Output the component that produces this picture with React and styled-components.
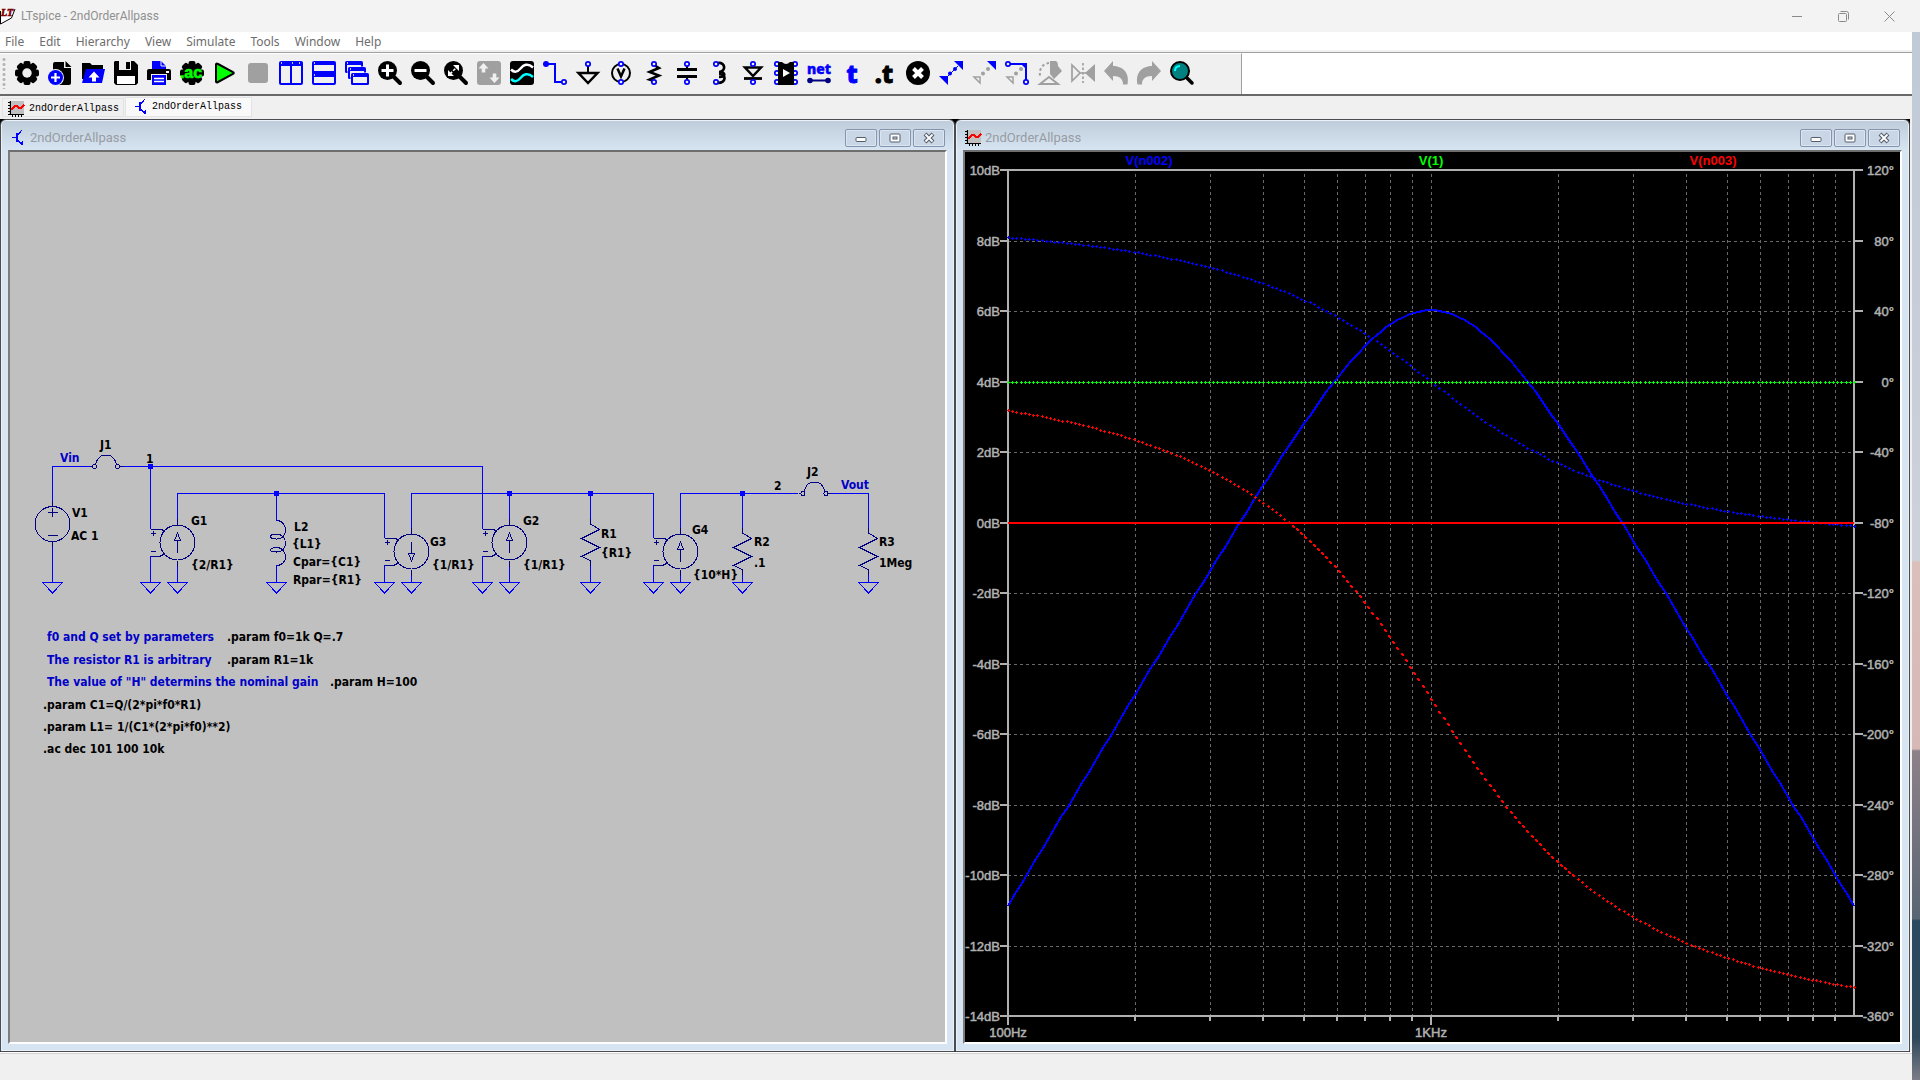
import React, { useState } from 'react';
import styled, { createGlobalStyle, css } from 'styled-components';

const GlobalStyle = createGlobalStyle`
  * { box-sizing:border-box; }
  html, body, #root { height:100%; margin:0; }
  body { overflow:hidden; font-family:"Noto Sans", sans-serif; font-size:12px; background:#f0f0f0; }
  button { font:inherit; color:inherit; border:none; background:none; padding:0; margin:0; }
  svg { display:block; overflow:visible; }
`;

const Screen = styled.div`height:100%; display:flex; flex-direction:column;`;

const TitleBar = styled.header`
  flex:none; height:32px; display:flex; align-items:center; background:#f3f3f3; color:#909090;
`;
const AppName = styled.h1`flex:1; margin:0 0 0 5px; font:400 12px Roboto, "Noto Sans", sans-serif;`;
const Caption = styled.div`display:flex; padding-right:8px;`;
const CaptionButton = styled.button`
  width:46px; height:32px; display:flex; align-items:center; justify-content:center;
  &:hover { background:#e5e5e5; }
`;

const Desktop = styled.div`flex:1; min-height:0; display:flex;`;
const Main = styled.div`flex:1; min-width:0; display:flex; flex-direction:column; background:#f0f0f0;`;
const Wallpaper = styled.div`
  flex:none; width:8px;
  background:linear-gradient(#c0cad7, #cdd1da 50.4%, #dabfba 50.6%, #d6b8b7 68.4%, #8d8189 68.6%, #596573 84.6%,
    #2a4a60 84.8%, #2f485b 96%, #7b7d87);
`;

const MenuBar = styled.nav`
  flex:none; height:20px; padding:1px 5px 0; display:flex; align-items:center; gap:15px;
  background:#fff; border-bottom:2px solid #f0f0f0; color:#6d6d6d;
`;
const MenuItem = styled.button`line-height:17px; &:hover { color:#000; }`;

const ToolRow = styled.div`
  flex:none; display:flex; background:#fff; height:44px;
  border-top:1px solid #a0a0a0; border-bottom:2px solid #696969;
`;
const ToolBar = styled.div`
  display:flex; align-items:center; width:1242px; padding-bottom:2px; background:#f0f0f0;
  border-top:1px solid #fff; border-right:1px solid #a0a0a0;
`;
const Grip = styled.div`
  width:4px; height:32px; margin:0 4px 0 2px;
  background:radial-gradient(circle, #b4b4b4 1px, transparent 2px) 0 0 / 4px 5px;
`;
const ToolButton = styled.button`
  width:33px; height:33px; display:flex; align-items:center; justify-content:center;
  &:hover:enabled { background:#dcebf8; }
`;

const TabRow = styled.div`flex:none; height:23px; padding:1px 2px 2px; display:flex; align-items:flex-end; gap:1px;`;
const Tab = styled.button`
  display:flex; align-items:center; gap:5px; padding:2px 4px 0 5px; height:19px;
  font:10px "Liberation Mono", monospace; color:#000; border:1px solid #e3e3e3;
  ${({ $active }) => $active && css`height:20px; width:127px; padding:0 6px 1px 7px; gap:3px; background:#f9f9f9;`}
`;

const Mdi = styled.main`flex:1; min-height:0; margin-right:2px; display:flex; background:#000;`;
const Child = styled.section`
  flex:1; min-width:0; display:flex; flex-direction:column; padding:0 7px 7px;
  border:1px solid #4b4b50; border-radius:6px 6px 0 0;
  background:linear-gradient(#becbd9, #d7e4f2 30px);
  box-shadow:inset 0 0 0 1px #e9f1f9;
`;
const ChildTitle = styled.div`
  flex:none; height:30px; display:flex; align-items:center; gap:2px; padding-left:2px; color:#979ca3;
  h2 { flex:1; margin:0; padding:5px 0 0 2px; font:400 13px/20px Roboto, "Noto Sans", sans-serif; }
  > svg { margin-top:5px; }
`;
const ChildButtons = styled.div`display:flex; gap:2px; padding:6px 2px 0 0;`;
const ChildButton = styled.button`
  width:32px; height:18px; display:flex; align-items:center; justify-content:center;
  border:1px solid #8593ad; border-radius:2px; background:#c9d6e5; box-shadow:inset 0 0 0 1px #dbe6f2;
  &:hover { background:#e1ecf8; }
`;
const Client = styled.div`
  flex:1; min-height:0; background:${({ $bg }) => $bg};
  border:2px solid; border-color:#6e6e6e #fff #fff #7c7c7c;
  svg { width:100%; height:100%; }
`;
const StatusBar = styled.footer`flex:none; height:28px; border-top:1px solid #fff; box-shadow:inset 0 1px #d4d4d4;`;

const Glyph = ({ size = 24, children }) => (
  <svg width={size} height={size} viewBox={`0 0 ${size} ${size}`} fill="none" aria-hidden="true">{children}</svg>
);

const B = '#0000ff';
const G = '#a0a0a0';

const gear = (
  <>
    <circle cx="12" cy="12" r="9.5" fill="#000" />
    {[0, 45, 90, 135].map(a => (
      <rect key={a} x="8.5" y="0" width="7" height="24" rx="2" fill="#000" transform={`rotate(${a} 12 12)`} />
    ))}
  </>
);

const lens = (
  <>
    <circle cx="9.5" cy="9.5" r="9.5" fill="#000" />
    <path d="M15 15l7 7" stroke="#000" strokeWidth="4" strokeLinecap="round" />
  </>
);

const pin = (cx, cy, key) => <circle key={key} cx={cx} cy={cy} r="2.2" fill="#f0f0f0" stroke={B} strokeWidth="1.7" />;
const pins = <>{pin(12, 3)}{pin(12, 21)}</>;

const tools = [
  ['Settings', <>{gear}<circle cx="12" cy="12" r="4.7" fill="#f0f0f0" /></>],
  ['New Schematic', <>
    <path d="M5 3a2 2 0 0 1 2-2h9v6h7v15a2 2 0 0 1-2 2H5z" fill="#000" /><path d="M17.500 0l6 6h-6z" fill="#000" />
    <circle cx="7.500" cy="16.500" r="8.500" fill="#f0f0f0" /><circle cx="7.500" cy="16.500" r="7.500" fill={B} />
    <path d="M7.500 12v9M3 16.500h9" stroke="#fff" strokeWidth="2.200" />
  </>],
  ['Open', <>
    <path d="M1 2h8l2 2h11v4H6l-3 10H1z" fill="#000" /><path d="M5 8h19l-3 14H1z" fill={B} />
    <path d="M13 10.500l-5.500 6h3.500v4h4v-4h3.500z" fill="#fff" />
  </>],
  ['Save', <>
    <path d="M1 0h19l4 4v18l-2 2H2l-2-2V1z" fill="#000" /><path d="M5 0h12v9H5z" fill="#f0f0f0" />
    <path d="M12 1h4v7h-4z" fill="#000" /><path d="M3 15h18v8H3z" fill="#fff" />
  </>],
  ['Print', <>
    <path d="M5 0h9l5 5v3H5z" fill={B} /><path d="M14 0v5h5" stroke="#f0f0f0" />
    <path d="M0 10q0-2 2-2h20q2 0 2 2v9H0z" fill="#000" /><path d="M19 10h3v2h-3z" fill="#fff" />
    <path d="M4 13h16v11H4z" fill="#f0f0f0" /><path d="M5 14h14v10H5z" fill={B} />
    <path d="M7 17.500h10M7 20.500h10" stroke="#fff" strokeWidth="1.500" />
  </>],
  ['AC Analysis', <>
    {gear}<text x="11" y="17" textAnchor="middle" fontFamily="Liberation Sans" fontWeight="700" fontSize="16" fill="#0f0" stroke="#0f0" strokeWidth=".6">.ac</text>
  </>],
  ['Run', <path d="M3 3.500v17q0 1.500 2 .500l15-8q1.500-1 0-2L5 3q-2-1-2 .500z" fill="#0f0" stroke="#000" strokeWidth="2" />],
  ['Stop', <rect x="2" y="2" width="20" height="20" rx="3" fill={G} />, true],
  ['Tile Vertically', <>
    <rect x="0" y="0" width="24" height="24" rx="2" fill={B} /><path d="M2 5h9v17H2zM13 5h9v17h-9z" fill="#f0f0f0" />
    <path d="M2 2h1M13 2h1M20 2h1" stroke="#fff" strokeWidth="1.500" />
  </>],
  ['Tile Horizontally', <>
    <rect x="0" y="0" width="24" height="24" rx="2" fill={B} /><path d="M2 4h20v6H2zM2 16h20v6H2z" fill="#f0f0f0" />
    <path d="M2 2h1M2 14h1" stroke="#fff" strokeWidth="1.500" />
  </>],
  ['Cascade', <>
    {[[0, 0], [3, 6], [6, 12]].map(([x, y]) => (
      <g key={x} transform={`translate(${x} ${y})`}>
        <rect x="-.5" y="-.5" width="19" height="13" rx="2" fill="#f0f0f0" />
        <rect width="18" height="12" rx="1.500" fill={B} /><path d="M2 4h14v6H2z" fill="#f0f0f0" /><path d="M2 2h1" stroke="#fff" strokeWidth="1.500" />
      </g>
    ))}
  </>],
  ['Zoom In', <>{lens}<path d="M9.500 3.500v12M3.500 9.500h12" stroke="#fff" strokeWidth="3" /></>],
  ['Zoom Out', <>{lens}<path d="M3.500 9.500h12" stroke="#fff" strokeWidth="3" /></>],
  ['Zoom to Fit', <>{lens}<path d="M9 4h6v6zM4 9v6h6z" fill="#fff" /><path d="M6 13l7-7" stroke="#fff" strokeWidth="1.500" strokeDasharray="3 1.500" /></>],
  ['Autorange', <>
    <rect width="24" height="24" rx="3" fill={G} />
    <path d="M6.500 2l-5 5.500h3.200v4h3.600v-4h3.200zM17.500 22l-5-5.500h3.200v-4h3.600v4h3.200z" fill="#f0f0f0" />
  </>, true],
  ['Waveforms', <>
    <rect width="24" height="24" rx="3" fill="#000" />
    <path d="M1 8.500c3.500 3.500 6.500 2.500 9.500-1s7-6 12.500-1" stroke="#fff" strokeWidth="2.500" />
    <path d="M1 18c3.500 3.500 6.500 2.500 9.500-1s7-6 12.500-1" stroke="#0ff" strokeWidth="2.500" />
  </>],
  ['Wire', <><path d="M3 3h9v18h9" stroke={B} strokeWidth="2" /><circle cx="3" cy="3" r="3" fill={B} />{pin(21, 21)}</>],
  ['Ground', <><path d="M12 4v8" stroke="#000" strokeWidth="2" /><path d="M2.500 12h19L12 22z" stroke="#000" strokeWidth="2.500" />{pin(12, 3)}</>],
  ['Voltage Source', <><circle cx="12" cy="12" r="9" stroke="#000" strokeWidth="2" /><path d="M8.500 7.500L12 15.500l3.500-8" stroke="#000" strokeWidth="2.500" />{pins}</>],
  ['Resistor', <><path d="M12 4l5 3-9.500 4 9.500 3.500-9.500 4L12 20" stroke="#000" strokeWidth="2.500" />{pins}</>],
  ['Capacitor', <><path d="M12 4v5M12 15v6" stroke="#000" strokeWidth="2" /><path d="M2 8.500h20M2 15.500h20" stroke="#000" strokeWidth="3" />{pins}</>],
  ['Inductor', <><path d="M10 2c8-1 8 9 1 9C18 11 18 16 11 16" stroke="#000" strokeWidth="2.700" /><path d="M11 13c8 0 7 9-1 9" stroke="#000" strokeWidth="2.700" />{pin(8, 3)}{pin(8, 21)}</>],
  ['Diode', <><path d="M4 6.500h16L12 15z" stroke="#000" strokeWidth="2.500" /><path d="M3 17.500h18" stroke="#000" strokeWidth="2.800" />{pins}</>],
  ['Component', <>
    {[3, 12, 21].map(y => <g key={y}>{pin(3, y)}{pin(21, y)}</g>)}
    <path d="M4 1h4q4 4 8 0h4v23H4z" fill="#000" /><path d="M9 8l7 4-7 4z" fill="#fff" />
  </>],
  ['Label Net', <>
    <text x="12" y="13" textAnchor="middle" fontFamily="Noto Sans" fontWeight="800" fontSize="14" fill={B} stroke={B} strokeWidth=".5">net</text>
    <path d="M3 19.500h18" stroke="#000080" strokeWidth="2" /><circle cx="3" cy="19.500" r="2.800" fill="#000080" /><circle cx="21" cy="19.500" r="2.800" fill="#000080" />
  </>],
  ['Text', <text x="12" y="22" textAnchor="middle" fontFamily="Noto Sans" fontWeight="800" fontSize="25" fill={B} stroke={B}>t</text>],
  ['SPICE Directive', <text x="11" y="22" textAnchor="middle" fontFamily="Noto Sans" fontWeight="800" fontSize="25" fill="#000" stroke="#000">.t</text>],
  ['Delete', <><circle cx="12" cy="12" r="12" fill="#000" /><path d="M7.500 7.500l9 9M16.500 7.500l-9 9" stroke="#fff" strokeWidth="4" /></>],
  ['Duplicate', <>
    <path d="M15 0h9v9zM0 15h9v9z" fill={B} /><path d="M5 19L19 5" stroke={B} strokeWidth="1" />
    <circle cx="11" cy="12.500" r="2" fill={B} /><circle cx="16" cy="8" r="2" fill={B} />
  </>],
  ['Move', <><path d="M15 0h9v9z" fill={B} /><path d="M2 16h6v6z" stroke={G} strokeWidth="1.500" /><circle cx="11" cy="12.500" r="2" fill={G} /><circle cx="16" cy="8" r="2" fill={G} /></>],
  ['Drag', <>
    <path d="M2 16h6v6z" stroke={G} strokeWidth="1.500" /><circle cx="11" cy="12.500" r="2" fill={G} /><circle cx="16" cy="8" r="2" fill={G} />
    <path d="M4 3h17v16" stroke={B} strokeWidth="2" /><path d="M15 2h7v7z" fill={B} />{pin(3, 3)}{pin(21, 21)}
  </>],
  ['Rotate', <>
    <path d="M11 2C5 3 1 7 2 15" stroke={G} strokeWidth="2" strokeDasharray="2.500 2.500" />
    <path d="M12 0h6q2 1 2 5l4 5-8 8-4-5z" fill={G} /><path d="M2 23l9-7 9 7z" fill="#f0f0f0" stroke={G} strokeWidth="2" />
  </>, true],
  ['Mirror', <><path d="M1 4v16l8-8zM9 12h6" stroke={G} strokeWidth="1.700" /><path d="M24 3v18l-10-9z" fill={G} /><path d="M12 2v20" stroke={G} strokeWidth="1.700" strokeDasharray="2.500 2" /></>, true],
  ['Undo', <path d="M9 0v5c9 0 17 6 14.500 18.500H19C19 18 16 15 9 15v5L0 10z" fill={G} />, true],
  ['Redo', <path d="M15 0v5C6 5-2 11 .5 23.500H5C5 18 8 15 15 15v5l9-10z" fill={G} />, true],
  ['Find', <>
    <path d="M16 16l6 6" stroke="#000" strokeWidth="3.500" strokeLinecap="round" /><circle cx="10" cy="10" r="9" fill="#008080" stroke="#000" strokeWidth="2" />
    <path d="M5 10q0-5 5-5" stroke="#0ff" strokeWidth="2" />
  </>],
];

const PlotIcon = () => (
  <svg width="16" height="16" viewBox="0 0 16 16" shapeRendering="crispEdges" aria-hidden="true">
    <rect x="1" width="15" height="14" fill="#c0c0c0" />
    <path d="M2 0h1v13h13v1H2zM0 1h2v1H0zM0 4h2v1H0zM0 7h2v1H0zM0 10h2v1H0zM0 13h2v1H0zM4 14h1v2H4zM7 14h1v2H7zM10 14h1v2h-1zM13 14h1v2h-1z" fill="#000" />
    <path d="M3 9l4-4h2l2 2h2l3-3" stroke="#f00" strokeWidth="1.500" fill="none" />
  </svg>
);
const SchematicIcon = () => (
  <svg width="16" height="16" viewBox="0 0 16 16" fill="none" stroke={B} shapeRendering="crispEdges" aria-hidden="true">
    <path d="M2 7.500h5" /><path d="M6.500 3v9" strokeWidth="2" /><path d="M7 6l5-6M7 9l5 6" />
    <path d="M9 14l4 1v-4z" fill={B} stroke="none" />
  </svg>
);
const Logo = () => (
  <svg width="16" height="18" viewBox="0 0 16 18" fill="none" aria-hidden="true">
    <path d="M0 2.500h15L11 13 0 16.500z" fill="#fff" /><path d="M.5 4v13l11-6L15 2" stroke="#000" />
    <text x="1" y="9" fontFamily="Liberation Serif" fontStyle="italic" fontWeight="700" fontSize="10" fill="#800000" stroke="#800000" strokeWidth=".7">LT</text>
  </svg>
);

// ---- schematic ----
const NAVY = '#000080';
const SchematicText = styled.text`
  font:700 12px "DejaVu Sans Condensed", "DejaVu Sans", sans-serif; font-stretch:condensed;
  fill:${({ $blue }) => $blue ? '#0000c8' : '#000'};
`;

const GROUND_Y = 430.5;
const grounds = [42.5, 140.5, 167.5, 266.5, 374.5, 401.5, 472.5, 499.5, 580.5, 643.5, 670.5, 732.5, 858.5];
const nodes = [[140.5, 314.5], [266.5, 341.5], [499.5, 341.5], [580.5, 341.5], [732.5, 341.5]];
const wires = `M42.500 349V314.500H82M112 314.500H472.500V377M140.500 314.500V377M42.500 395V430
  M167.500 367V341.500H374.500V386M266.500 341.500V369M266.500 413V430
  M401.500 376V341.500H643.500V386M499.500 341.500V367M580.500 341.500V368M580.500 413V430
  M670.500 376V341.500H788M820.500 341.500H858.500V377M732.500 341.500V377M732.500 422V430M858.500 422V430
  M140.500 404V430M167.500 413V430M374.500 413V430M401.500 422V430M472.500 404V430M499.500 413V430M643.500 413V430M670.500 422V430`;

const labels = [
  [50, 310, 'Vin', true], [90, 297, 'J1'], [136, 311, '1'], [62, 365, 'V1'], [61, 388, 'AC 1'],
  [181, 373, 'G1'], [181, 417, '{2/R1}'], [284, 379, 'L2'], [282, 396, '{L1}'], [283, 414, 'Cpar={C1}'], [283, 432, 'Rpar={R1}'],
  [420, 394, 'G3'], [422, 417, '{1/R1}'], [513, 373, 'G2'], [513, 417, '{1/R1}'], [591, 386, 'R1'], [591, 405, '{R1}'],
  [682, 382, 'G4'], [683, 427, '{10*H}'], [744, 394, 'R2'], [744, 415, '.1'], [869, 394, 'R3'], [869, 415, '1Meg'],
  [764, 338, '2'], [797, 324, 'J2'], [831, 337, 'Vout', true],
  [37, 489, 'f0 and Q set by parameters', true], [217, 489, '.param f0=1k Q=.7'],
  [37, 512, 'The resistor R1 is arbitrary', true], [217, 512, '.param R1=1k'],
  [37, 534, 'The value of "H" determins the nominal gain', true], [320, 534, '.param H=100'],
  [33, 557, '.param C1=Q/(2*pi*f0*R1)'], [33, 579, '.param L1= 1/(C1*(2*pi*f0)**2)'], [33, 601, '.ac dec 101 100 10k'],
];

const CurrentSource = ({ x, y, down }) => (
  <g transform={`translate(${x} ${y})`} stroke={NAVY} fill="none">
    <circle r="17.500" />
    <path d="M-27-13.500H-17L-13-11.500M-27 13.500H-17L-13 11.500M-27-9H-22M-24.500-11.500V-6.500M-27 9H-22M0-18V-24M0 18V24" />
    <path d="M0 10V-2M-3-2H3L0-9.500Z" transform={down ? 'scale(1 -1)' : undefined} />
  </g>
);
const Resistor = ({ x, y }) => (
  <path d={`M${x} ${y - 5}v5l9 5.500l-18 9l18 9l-18 9l9 4v5`} stroke={NAVY} fill="none" />
);
const Jumper = ({ x, y }) => (
  <g transform={`translate(${x} ${y})`} stroke={NAVY} fill="none">
    <circle cx="-11.500" r="2" /><circle cx="11.500" r="2" />
    <path d="M-16 0h2.500M13.500 0h3M-10.500-2.500L-9-6Q-6-11-3-11H3Q6-11 9-6L10.500-2.500" />
  </g>
);

function Schematic() {
  return (
    <svg viewBox="0 0 935 890" preserveAspectRatio="xMinYMin meet" role="img" aria-label="2ndOrderAllpass schematic">
      <g shapeRendering="crispEdges">
        <path d={wires} stroke={B} fill="none" />
        {grounds.map(x => <path key={x} d={`M${x - 10} ${GROUND_Y}h20l-10 10.500z`} stroke={B} fill="none" />)}
        {nodes.map(([x, y]) => <rect key={x} x={x - 2.5} y={y - 2.5} width="5" height="5" fill={B} />)}
        <g transform="translate(42.500 372)" stroke={NAVY} fill="none">
          <circle r="17.500" /><path d="M-5-11.500H5M0-16V-7M-5 11.500H5M0-18V-23M0 18V23" />
        </g>
        <CurrentSource x={167.5} y={390.5} />
        <CurrentSource x={401.5} y={399.5} down />
        <CurrentSource x={499.5} y={390.5} />
        <CurrentSource x={670.5} y={399.5} />
        <path
          d="M266.500 368.500C278 368.500 279 387 266.500 387C259 387 258 382 266.500 382C278 382 279 400 266.500 400C259 400 258 395.500 266.500 395.500C278 395.500 279 413.500 266.500 413.500"
          stroke={NAVY} fill="none"
        />
        <Resistor x={580.5} y={372} />
        <Resistor x={732.5} y={381} />
        <Resistor x={858.5} y={381} />
        <Jumper x={96} y={314.5} />
        <Jumper x={804.5} y={341.5} />
      </g>
      {labels.map(([x, y, text, blue]) => <SchematicText key={`${x}-${y}`} x={x} y={y} $blue={blue}>{text}</SchematicText>)}
    </svg>
  );
}

// ---- waveform plot ----
const AxisText = styled.text`
  font:13px "Liberation Sans", Arial, sans-serif; fill:#b0b0b0; stroke:#b0b0b0; stroke-width:.5px;
`;
const TraceName = styled.text`font:700 13px "Liberation Sans", Arial, sans-serif; text-anchor:middle; fill:${({ $color }) => $color};`;

const LEFT = 43, RIGHT = 889, TOP = 18, BOTTOM = 864;
const ROW = (BOTTOM - TOP) / 12;
const DECADE = (RIGHT - LEFT) / 2;
const Q = 0.7;

const dbY = db => TOP + ((10 - db) / 2) * ROW;
const degY = deg => TOP + ((120 - deg) / 40) * ROW;
const deg = rad => (rad * 180) / Math.PI;

// ac dec 101 100 10k
const sweep = Array.from({ length: 203 }, (_, i) => {
  const f = 0.1 * 10 ** (i / 101);
  const k = Q * (f - 1 / f);
  return { x: LEFT + (i / 101) * DECADE, db: 20 * Math.log10(2 / Math.sqrt(1 + k * k)), phase: -deg(Math.atan(k)) };
});
const bandpass = 'M' + sweep.map(p => `${Math.round(p.x)} ${Math.round(dbY(p.db))}`).join('L');
// a plus per point, drawn heavier where the trace is steep
const dots = fn => sweep.map((p, i) => {
  const x = Math.round(p.x), y = Math.round(fn(p));
  const steep = i > 0 && Math.abs(fn(p) - fn(sweep[i - 1])) > 3.5;
  return `M${x - 1} ${y}h3v1h-3zM${x} ${y - 1}h1v3h-1z` + (steep ? `M${x - 1} ${y - 1}h2v2h-2zM${x} ${y}h2v2h-2z` : '');
}).join('');

const grid = [0, 1].flatMap(d => [1, 2, 3, 4, 5, 6, 7, 8, 9].map(n => Math.round(LEFT + (d + Math.log10(n)) * DECADE))).slice(1);
const rows = Array.from({ length: 13 }, (_, i) => i);

function Plot() {
  return (
    <svg viewBox="0 0 935 890" preserveAspectRatio="xMinYMin meet" role="img" aria-label="2ndOrderAllpass waveforms">
      <g shapeRendering="crispEdges" fill="none">
        <g stroke="#696969">
          {grid.map(x => <path key={x} d={`M${x + 0.5} ${TOP + 4}V${BOTTOM}`} strokeDasharray="3 3" />)}
          {rows.slice(1, 12).map(i => <path key={i} d={`M${LEFT} ${Math.round(TOP + i * ROW) + 0.5}H${RIGHT}`} strokeDasharray="3 3" />)}
        </g>
        <g stroke="#b0b0b0" strokeWidth="2">
          <path d={`M${LEFT} ${TOP}H${RIGHT}V${BOTTOM}H${LEFT}Z`} />
          {rows.map(i => {
            const y = Math.round(TOP + i * ROW);
            return <path key={i} d={`M${LEFT - 8} ${y}h8M${RIGHT} ${y}h9`} />;
          })}
          {grid.map(x => <path key={x} d={`M${x} ${BOTTOM}v5`} />)}
          <path d={`M${LEFT} ${BOTTOM}v9M${LEFT + DECADE} ${BOTTOM}v9`} />
        </g>
        <path d={dots(p => degY(p.phase))} fill="#0000ff" />
        <path d={bandpass} stroke="#0000ff" strokeWidth="2" />
        <path d={dots(() => degY(0))} fill="#00ff00" />
        <path d={`M${LEFT} ${Math.round(dbY(0))}H${RIGHT}`} stroke="#ff0000" strokeWidth="2" />
        <path d={dots(p => degY(2 * p.phase - 180))} fill="#ff0000" />
      </g>
      {rows.map(i => {
        const y = Math.round(TOP + i * ROW) + 5;
        return (
          <g key={i}>
            <AxisText x={LEFT - 8} y={y} textAnchor="end">{10 - i * 2}dB</AxisText>
            <AxisText x={RIGHT + 40} y={y} textAnchor="end">{120 - i * 40}°</AxisText>
          </g>
        );
      })}
      <AxisText x={LEFT} y={BOTTOM + 21} textAnchor="middle">100Hz</AxisText>
      <AxisText x={LEFT + DECADE} y={BOTTOM + 21} textAnchor="middle">1KHz</AxisText>
      <TraceName x={LEFT + DECADE / 3} y="13" $color="#0000ff">V(n002)</TraceName>
      <TraceName x={LEFT + DECADE} y="13" $color="#00ff00">V(1)</TraceName>
      <TraceName x={RIGHT - DECADE / 3} y="13" $color="#ff0000">V(n003)</TraceName>
    </svg>
  );
}

function ChildWindow({ title, icon, bg, children }) {
  return (
    <Child>
      <ChildTitle>
        {icon}
        <h2>{title}</h2>
        <ChildButtons>
          <ChildButton aria-label="Minimize"><svg width="12" height="12"><rect x="1" y="5.500" width="10" height="4" rx="1" fill="#fff" stroke="#545d6c" /></svg></ChildButton>
          <ChildButton aria-label="Maximize"><svg width="12" height="10"><rect x="1" y="1" width="10" height="8" rx="1" fill="#fff" stroke="#545d6c" /><rect x="4" y="4" width="4" height="2" fill="#c9d6e5" stroke="#545d6c" /></svg></ChildButton>
          <ChildButton aria-label="Close">
            <svg width="12" height="10" fill="none"><path d="M2 1l8 8M10 1l-8 8" stroke="#545d6c" strokeWidth="4" /><path d="M2.500 1.500l7 7M9.500 1.500l-7 7" stroke="#fff" strokeWidth="1.800" /></svg>
          </ChildButton>
        </ChildButtons>
      </ChildTitle>
      <Client $bg={bg}>{children}</Client>
    </Child>
  );
}

const menus = ['File', 'Edit', 'Hierarchy', 'View', 'Simulate', 'Tools', 'Window', 'Help'];

export default function App() {
  const [tab, setTab] = useState('schematic');
  const name = '2ndOrderAllpass';

  return (
    <Screen>
      <GlobalStyle />
      <TitleBar>
        <Logo />
        <AppName>LTspice - {name}</AppName>
        <Caption>
          <CaptionButton aria-label="Minimize"><svg width="10" height="10"><path d="M0 5.500h10" stroke="#8a8a8a" /></svg></CaptionButton>
          <CaptionButton aria-label="Restore">
            <svg width="11" height="11" fill="none" stroke="#8a8a8a"><rect x=".5" y="2.500" width="8" height="8" rx="1" /><path d="M2.500 .5h6q2 0 2 2v6" /></svg>
          </CaptionButton>
          <CaptionButton aria-label="Close"><svg width="11" height="11"><path d="M.5 .5l10 10M10.500 .5l-10 10" stroke="#8a8a8a" /></svg></CaptionButton>
        </Caption>
      </TitleBar>
      <Desktop>
        <Main>
          <MenuBar>{menus.map(m => <MenuItem key={m}>{m}</MenuItem>)}</MenuBar>
          <ToolRow>
            <ToolBar role="toolbar">
              <Grip />
              {tools.map(([label, icon, off]) => (
                <ToolButton key={label} title={label} aria-label={label} disabled={off}><Glyph>{icon}</Glyph></ToolButton>
              ))}
            </ToolBar>
          </ToolRow>
          <TabRow role="tablist">
            <Tab role="tab" aria-selected={tab === 'plot'} $active={tab === 'plot'} onClick={() => setTab('plot')}><PlotIcon />{name}</Tab>
            <Tab role="tab" aria-selected={tab === 'schematic'} $active={tab === 'schematic'} onClick={() => setTab('schematic')}><SchematicIcon />{name}</Tab>
          </TabRow>
          <Mdi>
            <ChildWindow title={name} icon={<SchematicIcon />} bg="#c0c0c0"><Schematic /></ChildWindow>
            <ChildWindow title={name} icon={<PlotIcon />} bg="#000"><Plot /></ChildWindow>
          </Mdi>
          <StatusBar />
        </Main>
        <Wallpaper />
      </Desktop>
    </Screen>
  );
}
